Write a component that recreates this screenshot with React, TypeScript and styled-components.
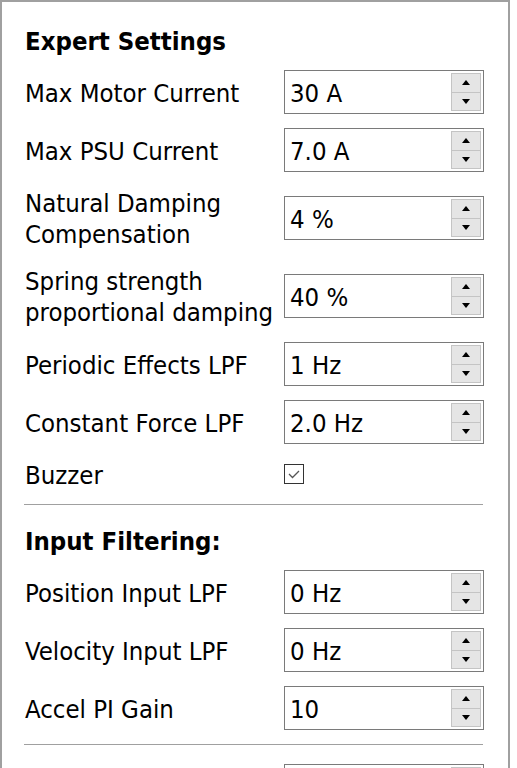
import { createGlobalStyle, styled } from 'styled-components';

const GlobalStyle = createGlobalStyle`
  html, body {
    margin: 0;
    background: #ffffff;
  }
  body {
    font-family: 'DejaVu Sans', 'Liberation Sans', sans-serif;
    font-stretch: condensed;
    color: #000000;
  }
`;

type Field = {
  label: string[];
  value?: string;
  checked?: boolean;
};

const expert: Field[] = [
  { label: ['Max Motor Current'], value: '30 A' },
  { label: ['Max PSU Current'], value: '7.0 A' },
  { label: ['Natural Damping', 'Compensation'], value: '4 %' },
  { label: ['Spring strength', 'proportional damping'], value: '40 %' },
  { label: ['Periodic Effects LPF'], value: '1 Hz' },
  { label: ['Constant Force LPF'], value: '2.0 Hz' },
  { label: ['Buzzer'], checked: true },
];

const filtering: Field[] = [
  { label: ['Position Input LPF'], value: '0 Hz' },
  { label: ['Velocity Input LPF'], value: '0 Hz' },
  { label: ['Accel PI Gain'], value: '10' },
];

// only the top edge of the next box is in view
const tail: Field[] = [{ label: [''], value: '' }];

function SpinBox({ value }: { value: string }) {
  return (
    <Spin>
      <SpinText>{value}</SpinText>
      <SpinButtons>
        <SpinButton>
          <svg width="8" height="5" viewBox="0 0 8 5">
            <path d="M0 5 L4 0 L8 5 Z" fill="#000" />
          </svg>
        </SpinButton>
        <SpinButton>
          <svg width="8" height="5" viewBox="0 0 8 5">
            <path d="M0 0 L8 0 L4 5 Z" fill="#000" />
          </svg>
        </SpinButton>
      </SpinButtons>
    </Spin>
  );
}

function Rows({ fields }: { fields: Field[] }) {
  return (
    <Grid>
      {fields.map((f, n) => (
        <Row key={n}>
          <Label $lines={f.label.length}>
            {f.label.map((line, i) => (
              <span key={i}>{line}</span>
            ))}
          </Label>
          {f.value !== undefined ? (
            <SpinBox value={f.value} />
          ) : (
            <CheckBox>
              {f.checked && (
                <svg width="14" height="14" viewBox="0 0 14 14">
                  <path
                    d="M2 7 L5.5 10.5 L12 4"
                    fill="none"
                    stroke="#555"
                    strokeWidth="1.3"
                  />
                </svg>
              )}
            </CheckBox>
          )}
        </Row>
      ))}
    </Grid>
  );
}

export default function App() {
  return (
    <>
      <GlobalStyle />
      <Frame>
        <Heading>Expert Settings</Heading>
        <Rows fields={expert} />
        <Separator />
        <Heading>Input Filtering:</Heading>
        <Rows fields={filtering} />
        <Separator $after={19} />
        <Rows fields={tail} />
      </Frame>
    </>
  );
}

const Frame = styled.div`
  box-sizing: border-box;
  width: 510px;
  height: 768px;
  overflow: hidden;
  border: 2px solid #a0a0a0;
  border-bottom: none;
  padding: 17px 24px 0 23px;
  display: flex;
  flex-direction: column;
`;

const Heading = styled.div`
  height: 37px;
  line-height: 45px;
  font-size: 25.5px;
  font-weight: bold;
  margin-bottom: 14px;
  white-space: nowrap;
`;

const Grid = styled.div`
  display: flex;
  flex-direction: column;
  gap: 14px;
`;

const Row = styled.div`
  display: grid;
  grid-template-columns: 1fr 200px;
  align-items: center;
`;

const Label = styled.div<{ $lines: number }>`
  display: flex;
  flex-direction: column;
  justify-content: center;
  box-sizing: border-box;
  height: ${(p) => (p.$lines > 1 ? 64 : 32)}px;
  padding-top: 2px;
  font-size: 25.5px;
  line-height: ${(p) => (p.$lines > 1 ? 31 : 32)}px;
  white-space: nowrap;
`;

const Spin = styled.div`
  box-sizing: border-box;
  height: 44px;
  border: 1px solid #7a7a7a;
  display: flex;
  align-items: center;
  padding: 2px 2px 2px 5px;
`;

const SpinText = styled.div`
  flex: 1;
  font-size: 25.5px;
  padding-top: 2px;
  white-space: nowrap;
`;

const SpinButtons = styled.div`
  width: 30px;
  height: 38px;
  display: flex;
  flex-direction: column;
`;

const SpinButton = styled.div`
  box-sizing: border-box;
  flex: 1;
  background: #e5e5e5;
  border: 1px solid #c4c4c4;
  display: flex;
  align-items: center;
  justify-content: center;
  & + & {
    border-top: none;
  }
`;

const CheckBox = styled.div`
  box-sizing: border-box;
  width: 20px;
  height: 20px;
  border: 1px solid #333333;
  background: #ffffff;
  display: flex;
  align-items: center;
  justify-content: center;
`;

const Separator = styled.div<{ $after?: number }>`
  height: 1px;
  background: #a0a0a0;
  margin: 14px 1px ${(p) => p.$after ?? 14}px -1px;
  flex-shrink: 0;
`;
